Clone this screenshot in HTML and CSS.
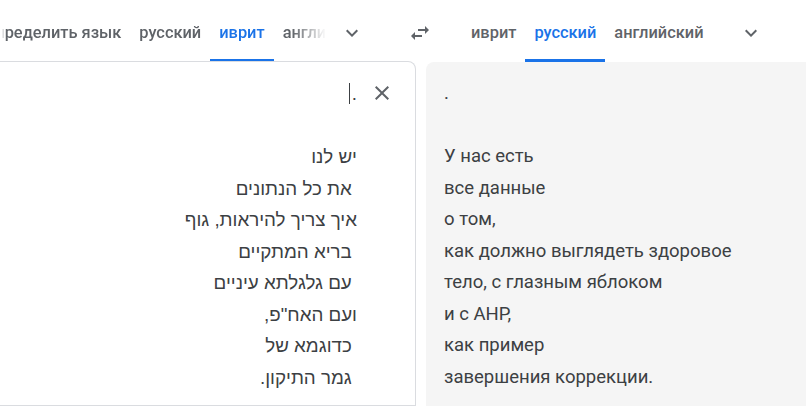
FILE: index.html
```html
<!DOCTYPE html>
<html lang="ru">
<head>
    <meta charset="UTF-8">
    <meta name="viewport" content="width=device-width, initial-scale=1.0">
    <title>Переводчик</title>
    <link rel="stylesheet" href="styles.css">
</head>
<body>
    <div class="translator">
        <div class="langbar">
            <div class="langs langs-source">
                <div class="tabs fade">
                    <div class="tab tab-detect">Определить язык</div>
                    <div class="tab">русский</div>
                    <div class="tab on">иврит</div>
                    <div class="tab">английский</div>
                </div>
                <div class="more">
                    <svg width="24" height="24" viewBox="0 0 24 24"><path d="M7.41 8.59 12 13.17l4.59-4.58L18 10l-6 6-6-6z" fill="#5f6368"/></svg>
                </div>
            </div>
            <div class="swap">
                <svg width="24" height="24" viewBox="0 0 24 24"><path d="M6.99 11 3 15l3.99 4v-3H14v-2H6.99v-3zM21 9l-3.99-4v3H10v2h7.01v3L21 9z" fill="#5f6368"/></svg>
            </div>
            <div class="langs langs-target">
                <div class="tabs">
                    <div class="tab">иврит</div>
                    <div class="tab on">русский</div>
                    <div class="tab">английский</div>
                </div>
                <div class="more">
                    <svg width="24" height="24" viewBox="0 0 24 24"><path d="M7.41 8.59 12 13.17l4.59-4.58L18 10l-6 6-6-6z" fill="#5f6368"/></svg>
                </div>
            </div>
        </div>

        <div class="panels">
            <div class="panel panel-source">
                <div class="clear">
                    <svg width="24" height="24" viewBox="0 0 24 24"><path d="M19 6.41 17.59 5 12 10.59 6.41 5 5 6.41 10.59 12 5 17.59 6.41 19 12 13.41 17.59 19 19 17.59 13.41 12z" fill="#5f6368"/></svg>
                </div>
                <div class="source-text" dir="rtl">.<span class="caret"></span>

יש לנו
 את כל הנתונים
איך צריך להיראות, גוף
 בריא המתקיים
 עם גלגלתא עיניים
ועם האח"פ,
 כדוגמא של
 גמר התיקון.</div>
            </div>
            <div class="panel panel-target">
                <div class="target-text">.

У нас есть
все данные
о том,
как должно выглядеть здоровое
тело, с глазным яблоком
и с AHP,
как пример
завершения коррекции.</div>
            </div>
        </div>
    </div>
</body>
</html>
```

FILE: styles.css
```css
*{
    padding: 0;
    margin: 0;
    box-sizing: border-box;
}
html, body{
    width: 806px;
    height: 406px;
    overflow: hidden;
    background: #fff;
}
body{
    font-family: Roboto, "Liberation Sans", Arial, sans-serif;
    color: #3c4043;
}

.translator{
    width: 830px;
}

.langbar{
    display: flex;
    height: 62px;
}
.langs{
    display: flex;
    align-items: stretch;
}
.langs-source{
    width: 400px;
    overflow: hidden;
}
.langs-target{
    padding-left: 22px;
}
.tabs{
    display: flex;
    overflow: hidden;
}
.tabs.fade{
    width: 328px;
    flex-shrink: 0;
    -webkit-mask-image: linear-gradient(to right, transparent 2px, #000 6px, #000 292px, transparent 326px);
    mask-image: linear-gradient(to right, transparent 2px, #000 6px, #000 292px, transparent 326px);
}
.tab{
    flex-shrink: 0;
    height: 62px;
    padding: 7px 9px 0;
    font-size: 16.4px;
    font-weight: 500;
    line-height: 52px;
    color: #5f6368;
    white-space: nowrap;
    border-bottom: 3px solid transparent;
    cursor: pointer;
}
.tab.on{
    color: #1a73e8;
    border-bottom-color: #1a73e8;
}
.tab-detect{
    margin-left: -25px;
}
.more, .swap{
    display: flex;
    align-items: center;
    justify-content: center;
    padding-top: 4px;
}
.more{
    width: 48px;
}
.langs-target .more{
    margin-left: 14px;
}
.swap{
    width: 40px;
}

.panels{
    display: flex;
    gap: 10px;
    height: 344px;
}
.panel{
    position: relative;
    height: 100%;
}
.panel-source{
    width: 416px;
    border: 1px solid #dadce0;
    border-left: none;
    border-radius: 0 8px 0 0;
    margin-top: -1px;
    height: 345px;
}
.panel-target{
    flex: 1;
    background: #f5f5f5;
    border-radius: 8px 0 0 0;
}
.source-text, .target-text{
    white-space: pre-wrap;
    line-height: 31.5px;
}
.source-text{
    padding: 16px 58px 0 0;
    text-align: right;
    font-family: "Liberation Sans", Arial, sans-serif;
    font-size: 18.75px;
    color: #3c4043;
}
.target-text{
    padding: 16px 0 0 18px;
    font-size: 18.5px;
}
.caret{
    display: inline-block;
    width: 1px;
    height: 21px;
    background: #3c4043;
    vertical-align: -4px;
    margin-right: 2px;
}
.clear{
    position: absolute;
    top: 13px;
    right: 15px;
    width: 36px;
    height: 36px;
    display: flex;
    align-items: center;
    justify-content: center;
    cursor: pointer;
}
```
